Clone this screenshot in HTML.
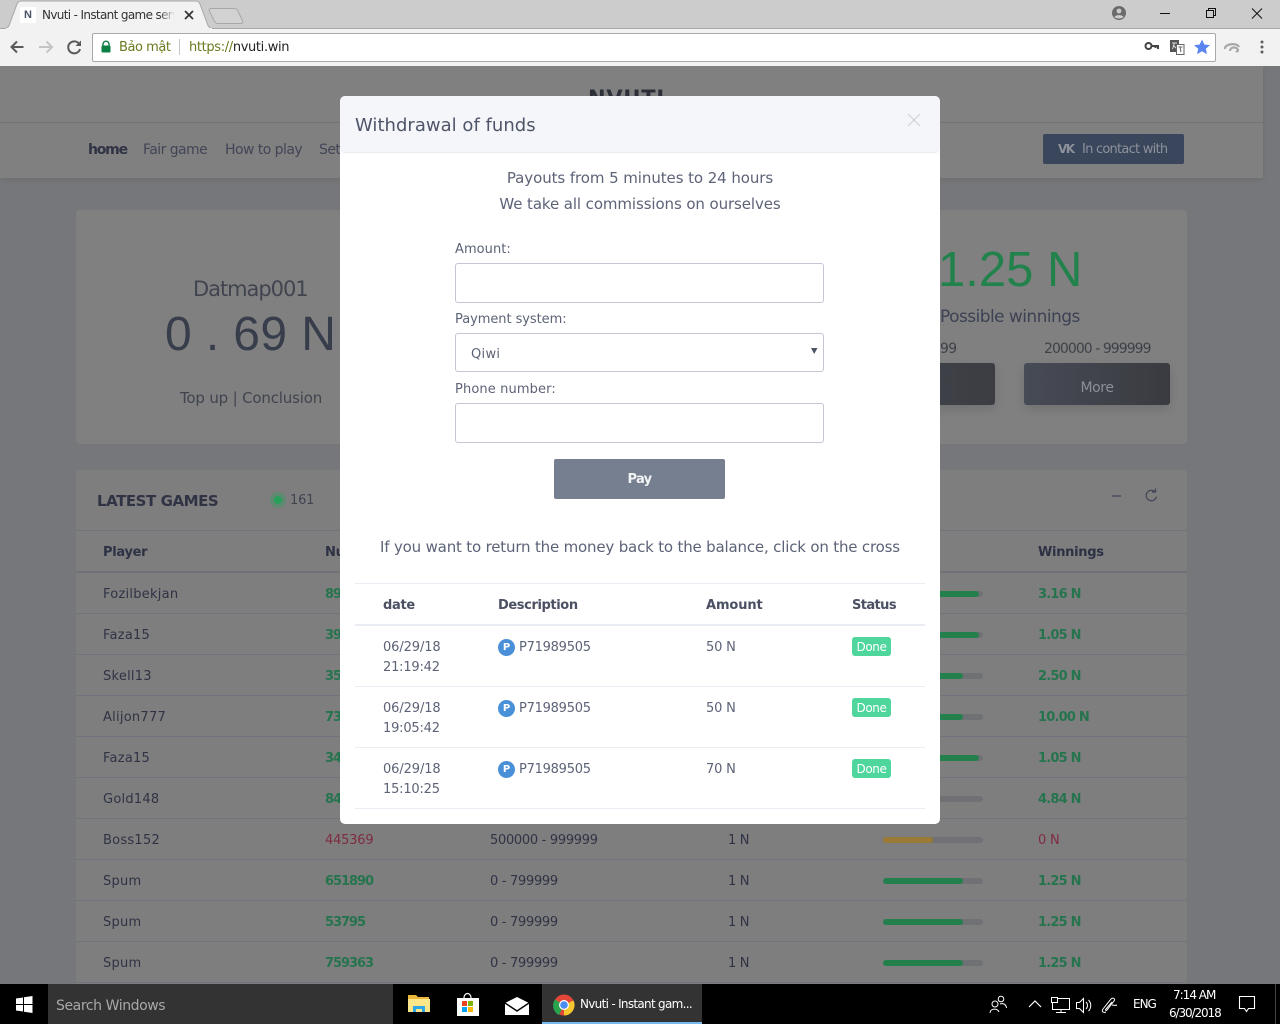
<!DOCTYPE html>
<html><head><meta charset="utf-8"><title>Nvuti</title>
<style>
html,body{margin:0;padding:0;width:1280px;height:1024px;overflow:hidden;background:#76777a}
body{position:relative;font-family:"DejaVu Sans","Liberation Sans",sans-serif;font-size:14px}
.t{position:absolute;white-space:nowrap;line-height:20px;height:20px}
.b{position:absolute}
.u{font-family:"Liberation Sans",sans-serif}
.tm{color:#5d6377;font-size:15px;letter-spacing:-.08px;margin-top:1px}
.sm{color:#5d6377;font-size:13px;letter-spacing:-.2px;margin-top:2px}
.th{color:#4b5063;font-size:13px;font-weight:bold;letter-spacing:-.3px;margin-top:2px}
.p{color:#2f3344;font-size:13px;letter-spacing:.25px;margin-top:2px}
.g{color:#26744e;font-size:13px;font-weight:bold;letter-spacing:-.8px;margin-top:2px}
.gn{color:#26744e;font-size:13px;font-weight:bold;letter-spacing:-1.05px;margin-top:2px}
.r{color:#7f2c3f;font-size:13px;letter-spacing:-.2px;margin-top:2px}
.d{color:#2f3344;font-size:13px;letter-spacing:-.3px;margin-top:2px}
.ln{position:absolute;height:1px;background:#70737b}
.bar{position:absolute;left:883px;width:100px;height:6px;border-radius:3px;background:#707175}
.bar i{display:block;height:6px;border-radius:3px;background:#23804d}
.mln{position:absolute;left:355px;width:570px;height:1px;background:#e9ecf3}
.inp{position:absolute;left:455px;width:367px;background:#fff;border:1px solid #c4c6d2;border-radius:3px}
.badge{position:absolute;left:852px;width:39px;height:19px;background:#4fd69c;border-radius:3px;color:#fff;font-size:12px;line-height:20px;text-align:center;letter-spacing:-.4px}
.pi{position:absolute;left:498px;width:17px;height:17px;border-radius:50%;background:#4a90d9;color:#fff;font-size:10px;font-weight:bold;line-height:17px;text-align:center}
</style></head><body>

<!-- PAGE (dimmed) -->
<div class="b" style="left:0;top:66px;width:1263px;height:112px;background:#808080;box-shadow:0 2px 6px rgba(0,0,0,.08)"></div>
<div class="ln" style="left:0;top:122px;width:1263px;background:#737373"></div>
<div class="t" style="left:588px;top:83px;width:78px;height:13px;overflow:hidden;font-size:21px;font-weight:bold;color:#2c2f38;line-height:30px;letter-spacing:.8px">NVUTI</div>
<div class="t" style="left:88px;top:140px;font-size:14px;font-weight:bold;color:#2f3344;letter-spacing:-1.2px">home</div>
<div class="t" style="left:143px;top:140px;font-size:14px;color:#414556;letter-spacing:-.55px">Fair game</div>
<div class="t" style="left:225px;top:140px;font-size:14px;color:#414556;letter-spacing:-.55px">How to play</div>
<div class="t" style="left:319px;top:140px;font-size:14px;color:#414556;letter-spacing:-.55px">Set</div>
<div class="b" style="left:1043px;top:134px;width:141px;height:30px;background:#3a465b;border-radius:2px"></div>
<div class="t" style="left:1058px;top:139px;font-size:12px;font-weight:bold;color:#8d919b;letter-spacing:-1.5px">VK</div>
<div class="t" style="left:1082px;top:140px;font-size:13px;color:#8d919b;letter-spacing:-.75px">In contact with</div>

<div class="b" style="left:76px;top:210px;width:1111px;height:234px;background:#808080;border-radius:4px"></div>
<div class="t" style="left:193px;top:278px;font-size:21px;line-height:22px;color:#40444f;letter-spacing:-1.05px">Datmap001</div>
<div class="t" style="left:165px;top:305px;height:60px;line-height:60px;font-size:48px;color:#383d4b;letter-spacing:.4px;font-family:'Liberation Sans',sans-serif">0 . 69 N</div>
<div class="t" style="left:180px;top:388px;font-size:15px;color:#40444f;letter-spacing:-.18px">Top up | Conclusion</div>
<div class="t" style="left:938px;top:240px;height:60px;line-height:60px;font-size:49px;color:#21824c;font-family:'Liberation Sans',sans-serif">1.25 N</div>
<div class="t" style="left:940px;top:307px;font-size:17px;color:#3c4253;letter-spacing:-.55px">Possible winnings</div>
<div class="t" style="left:940px;top:339px;font-size:14px;color:#3e4149;letter-spacing:-.6px">99</div>
<div class="t" style="left:1044px;top:339px;font-size:14px;color:#3e4149;letter-spacing:-.95px">200000 - 999999</div>
<div class="b" style="left:930px;top:363px;width:65px;height:42px;background:linear-gradient(90deg,#3f4149,#3c3d42);border-radius:3px;box-shadow:0 4px 10px rgba(0,0,0,.12)"></div>
<div class="b" style="left:1024px;top:363px;width:146px;height:42px;background:linear-gradient(90deg,#474b56,#3a3b40);border-radius:3px;box-shadow:0 4px 10px rgba(0,0,0,.12)"></div>
<div class="t" style="left:1024px;width:146px;top:378px;text-align:center;font-size:14px;color:#8b8e94;letter-spacing:-.4px">More</div>

<div class="b" style="left:76px;top:470px;width:1111px;height:514px;background:#7e7e7f;border-radius:4px 4px 0 0"></div>
<div class="ln" style="left:76px;top:530px;width:1111px"></div>
<div class="b" style="left:76px;top:571px;width:1111px;height:2px;background:#6e7278"></div>
<div class="t" style="left:97px;top:491px;font-size:15px;font-weight:bold;color:#2f3344;letter-spacing:-.45px">LATEST GAMES</div>
<div class="b" style="left:270px;top:492px;width:16px;height:16px;border-radius:50%;background:#5f8a72"></div>
<div class="b" style="left:274px;top:496px;width:8px;height:8px;border-radius:50%;background:#28a05a"></div>
<div class="t" style="left:290px;top:491px;font-size:13px;color:#40444f;letter-spacing:-.2px">161</div>
<svg class="b" style="left:1105px;top:486px" width="60" height="22" fill="none" stroke="#3f4354" stroke-width="1.2"><path d="M7 10h9"/><path d="M50 5.700a5.200 5.200 0 1 0 1.500 5M50.500 2.500v3.500H47"/></svg>

<div class="t th" style="left:103px;top:541px;color:#2d3144">Player</div>
<div class="t th" style="left:325px;top:541px;color:#2d3144">Nu</div>
<div class="t th" style="left:1038px;top:541px;color:#2d3144">Winnings</div>

<div class="t p" style="left:103px;top:583px">Fozilbekjan</div><div class="t gn" style="left:325px;top:583px">89</div><div class="t g" style="left:1038px;top:583px">3.16 N</div>
<div class="ln" style="left:76px;top:613px;width:1111px"></div>
<div class="t p" style="left:103px;top:624px">Faza15</div><div class="t gn" style="left:325px;top:624px">39</div><div class="t g" style="left:1038px;top:624px">1.05 N</div>
<div class="ln" style="left:76px;top:654px;width:1111px"></div>
<div class="t p" style="left:103px;top:665px">Skell13</div><div class="t gn" style="left:325px;top:665px">35</div><div class="t g" style="left:1038px;top:665px">2.50 N</div>
<div class="ln" style="left:76px;top:695px;width:1111px"></div>
<div class="t p" style="left:103px;top:706px">Alijon777</div><div class="t gn" style="left:325px;top:706px">73</div><div class="t g" style="left:1038px;top:706px">10.00 N</div>
<div class="ln" style="left:76px;top:736px;width:1111px"></div>
<div class="t p" style="left:103px;top:747px">Faza15</div><div class="t gn" style="left:325px;top:747px">34</div><div class="t g" style="left:1038px;top:747px">1.05 N</div>
<div class="ln" style="left:76px;top:777px;width:1111px"></div>
<div class="t p" style="left:103px;top:788px">Gold148</div><div class="t gn" style="left:325px;top:788px">84</div><div class="t g" style="left:1038px;top:788px">4.84 N</div>
<div class="ln" style="left:76px;top:818px;width:1111px"></div>
<div class="t p" style="left:103px;top:829px">Boss152</div><div class="t r" style="left:325px;top:829px">445369</div><div class="t d" style="left:490px;top:829px">500000 - 999999</div><div class="t d" style="left:728px;top:829px">1 N</div><div class="t r" style="left:1038px;top:829px">0 N</div>
<div class="ln" style="left:76px;top:859px;width:1111px"></div>
<div class="t p" style="left:103px;top:870px">Spum</div><div class="t gn" style="left:325px;top:870px">651890</div><div class="t d" style="left:490px;top:870px">0 - 799999</div><div class="t d" style="left:728px;top:870px">1 N</div><div class="t g" style="left:1038px;top:870px">1.25 N</div>
<div class="ln" style="left:76px;top:900px;width:1111px"></div>
<div class="t p" style="left:103px;top:911px">Spum</div><div class="t gn" style="left:325px;top:911px">53795</div><div class="t d" style="left:490px;top:911px">0 - 799999</div><div class="t d" style="left:728px;top:911px">1 N</div><div class="t g" style="left:1038px;top:911px">1.25 N</div>
<div class="ln" style="left:76px;top:941px;width:1111px"></div>
<div class="t p" style="left:103px;top:952px">Spum</div><div class="t gn" style="left:325px;top:952px">759363</div><div class="t d" style="left:490px;top:952px">0 - 799999</div><div class="t d" style="left:728px;top:952px">1 N</div><div class="t g" style="left:1038px;top:952px">1.25 N</div>
<div class="ln" style="left:76px;top:982px;width:1111px"></div>

<div class="bar" style="top:591px"><i style="width:96px"></i></div>
<div class="bar" style="top:632px"><i style="width:96px"></i></div>
<div class="bar" style="top:673px"><i style="width:80px"></i></div>
<div class="bar" style="top:714px"><i style="width:80px"></i></div>
<div class="bar" style="top:755px"><i style="width:96px"></i></div>
<div class="bar" style="top:796px"><i style="width:50px"></i></div>
<div class="bar" style="top:837px"><i style="width:50px;background:#9a7a34"></i></div>
<div class="bar" style="top:878px"><i style="width:80px"></i></div>
<div class="bar" style="top:919px"><i style="width:80px"></i></div>
<div class="bar" style="top:960px"><i style="width:80px"></i></div>

<!-- MODAL -->
<div class="b" style="left:340px;top:96px;width:600px;height:728px;background:#fff;border-radius:5px;overflow:hidden">
  <div class="b" style="left:0;top:0;width:600px;height:56px;background:#f5f6fa;border-bottom:1px solid #e9ebf0;border-radius:5px"></div>
</div>
<div class="t" style="left:355px;top:116px;font-size:18px;color:#4f5569;letter-spacing:.02px">Withdrawal of funds</div>
<svg class="b" style="left:907px;top:113px" width="14" height="14" stroke="#cfd1d6" stroke-width="1.2"><path d="M1 1l12 12M13 1L1 13"/></svg>
<div class="t tm" style="left:340px;width:600px;text-align:center;top:167px">Payouts from 5 minutes to 24 hours</div>
<div class="t tm" style="left:340px;width:600px;text-align:center;top:193px;letter-spacing:-.1px">We take all commissions on ourselves</div>
<div class="t sm" style="left:455px;top:238px;letter-spacing:.05px">Amount:</div>
<div class="inp" style="top:263px;height:38px"></div>
<div class="t sm" style="left:455px;top:308px;letter-spacing:-.06px">Payment system:</div>
<div class="inp" style="top:333px;height:37px"></div>
<div class="t sm" style="left:471px;top:343px;letter-spacing:.3px">Qiwi</div>
<svg class="b" style="left:811px;top:348px" width="7" height="6"><path d="M0 0h6.500L3.200 6z" fill="#4f5569"/></svg>
<div class="t sm" style="left:455px;top:378px;letter-spacing:.12px">Phone number:</div>
<div class="inp" style="top:403px;height:38px"></div>
<div class="b" style="left:554px;top:459px;width:171px;height:40px;background:#767f8f;border-radius:2px"></div>
<div class="t" style="left:554px;width:171px;text-align:center;top:470px;color:#f2f3f5;font-size:13px;font-weight:bold;letter-spacing:-.7px">Pay</div>
<div class="t tm" style="left:340px;width:600px;text-align:center;top:536px;letter-spacing:-.18px">If you want to return the money back to the balance, click on the cross</div>

<div class="mln" style="top:583px"></div>
<div class="t th" style="left:383px;top:594px">date</div>
<div class="t th" style="left:498px;top:594px;letter-spacing:-.4px">Description</div>
<div class="t th" style="left:706px;top:594px;letter-spacing:-.1px">Amount</div>
<div class="t th" style="left:852px;top:594px;letter-spacing:-.6px">Status</div>
<div class="mln" style="top:624px;height:2px"></div>

<div class="t sm" style="left:383px;top:636px;letter-spacing:-.1px">06/29/18</div><div class="t sm" style="left:383px;top:656px">21:19:42</div>
<div class="pi" style="top:639px">P</div><div class="t sm" style="left:519px;top:636px;letter-spacing:-.25px">P71989505</div>
<div class="t sm" style="left:706px;top:636px">50 N</div><div class="badge" style="top:637px">Done</div>
<div class="mln" style="top:686px"></div>

<div class="t sm" style="left:383px;top:697px;letter-spacing:-.1px">06/29/18</div><div class="t sm" style="left:383px;top:717px">19:05:42</div>
<div class="pi" style="top:700px">P</div><div class="t sm" style="left:519px;top:697px;letter-spacing:-.25px">P71989505</div>
<div class="t sm" style="left:706px;top:697px">50 N</div><div class="badge" style="top:698px">Done</div>
<div class="mln" style="top:747px"></div>

<div class="t sm" style="left:383px;top:758px;letter-spacing:-.1px">06/29/18</div><div class="t sm" style="left:383px;top:778px">15:10:25</div>
<div class="pi" style="top:761px">P</div><div class="t sm" style="left:519px;top:758px;letter-spacing:-.25px">P71989505</div>
<div class="t sm" style="left:706px;top:758px">70 N</div><div class="badge" style="top:759px">Done</div>
<div class="mln" style="top:808px"></div>

<!-- BROWSER CHROME -->
<div class="b" style="left:0;top:0;width:1280px;height:66px;background:#f2f2f2"></div>
<div class="b" style="left:0;top:0;width:1280px;height:28px;background:#cccccc"></div>
<svg class="b" style="left:0;top:0" width="260" height="30">
  <path d="M0 28.500h5c2 0 3-1 4-3L17 4c1-2 2-3 4-3h175c2 0 3 1 4 3l8 21.500c1 2 2 3 4 3h48" fill="#f2f2f2" stroke="#a8a8a8"/>
  <rect x="6" y="28" width="206" height="2" fill="#f2f2f2"/>
  <path d="M211 8.500c-1.500 0-2.200 1-1.800 2.200l5.500 11c.6 1.200 1.600 1.800 3 1.800h23c1.800 0 2.600-1.200 2-2.500l-5-10.500c-.7-1.400-1.700-2-3.200-2z" fill="#d2d2d2" stroke="#a8a8a8"/>
  <rect x="20" y="7" width="16" height="16" fill="#fff"/>
</svg>
<div class="b" style="left:212px;top:28px;width:1068px;height:1px;background:#a8a8a8"></div>
<div class="t u" style="left:24px;top:5px;font-size:11px;font-weight:bold;color:#4a5068">N</div>
<div class="t" style="left:42px;top:5px;width:133px;overflow:hidden;font-size:12px;color:#333;letter-spacing:-.65px;-webkit-mask-image:linear-gradient(90deg,#000 88%,transparent)">Nvuti - Instant game service</div>
<svg class="b" style="left:184px;top:10px" width="10" height="10" stroke="#333" stroke-width="1.700"><path d="M1 1l8 8M9 1L1 9"/></svg>
<svg class="b" style="left:1110px;top:5px" width="170" height="20">
  <circle cx="9" cy="8" r="7" fill="#6b6b6b"/><circle cx="9" cy="6" r="2.400" fill="#ccc"/><path d="M4.500 12c1-2.500 8-2.500 9 0-2 2-7 2-9 0z" fill="#ccc"/>
  <path d="M50 8.500h10" stroke="#111" stroke-width="1"/>
  <rect x="96.500" y="5.500" width="7" height="7" fill="none" stroke="#111"/><path d="M98.500 5.500v-2h7v7h-2" fill="none" stroke="#111"/>
  <path d="M142 3.500l10 10M152 3.500l-10 10" stroke="#111" stroke-width="1"/>
</svg>
<svg class="b" style="left:0;top:28px" width="90" height="38" fill="none">
  <path d="M23.500 19H12M17 13.500L11.500 19l5.500 5.500" stroke="#5a5a5a" stroke-width="2"/>
  <path d="M39 19h12M46.500 13.500L52 19l-5.500 5.500" stroke="#c4c4c4" stroke-width="2"/>
  <path d="M79.500 16.500A6 6 0 1 0 80 21" stroke="#5a5a5a" stroke-width="2"/><path d="M81 12.500v5.500h-5.500z" fill="#5a5a5a"/>
</svg>
<div class="b" style="left:92px;top:33px;width:1122px;height:27px;background:#fff;border:1px solid #a9a9a9;border-radius:2px"></div>
<svg class="b" style="left:100px;top:40px" width="12" height="13"><path d="M3 6V4.200a3 3 0 0 1 6 0V6" fill="none" stroke="#0b8043" stroke-width="1.400"/><rect x="1.500" y="5.500" width="9" height="7" rx="1" fill="#0b8043"/></svg>
<div class="t" style="left:119px;top:38px;font-size:13px;color:#6b7a1f;letter-spacing:-.45px">Bảo mật</div>
<div class="b" style="left:179px;top:39px;width:1px;height:16px;background:#c4c4c4"></div>
<div class="t" style="left:189px;top:38px;font-size:13px;letter-spacing:-.35px;color:#6b7a1f">https://<span style="color:#222">nvuti.win</span></div>
<svg class="b" style="left:1144px;top:36px" width="130" height="22">
  <circle cx="4.500" cy="10" r="3" fill="none" stroke="#444" stroke-width="2"/><path d="M8 10h6v3M11.500 10v2" fill="none" stroke="#444" stroke-width="2"/>
  <rect x="26" y="4" width="9" height="12" fill="#555"/><path d="M28 7h5M30.500 7l-2 6M29 9l4 4" stroke="#ddd" fill="none"/><rect x="32.500" y="8.500" width="7.500" height="10" fill="#fff" stroke="#666"/><path d="M34.500 11h4M36 11l1 5" stroke="#666" fill="none"/>
  <path d="M58 3.500l2.300 5 5.700.6-4.200 3.700 1.200 5.500-5-3-5 3 1.200-5.500-4.200-3.700 5.700-.6z" fill="#5a84f0"/>
  <path d="M81 13c-1-5 12-7 14-2M86 15c0-4 6-5 8-1 0 1-1 2-2 1" fill="none" stroke="#a8a8a8" stroke-width="2.200"/>
  <circle cx="118" cy="6" r="1.500" fill="#5f5f5f"/><circle cx="118" cy="11" r="1.500" fill="#5f5f5f"/><circle cx="118" cy="16" r="1.500" fill="#5f5f5f"/>
</svg>

<!-- TASKBAR -->
<div class="b" style="left:0;top:984px;width:1280px;height:40px;background:#000"></div>
<svg class="b" style="left:16px;top:996px" width="17" height="17" fill="#fff"><path d="M0 2.500l7-1v6.500H0zM8 1.300L16.500 0v8H8zM0 9h7v6.500l-7-1zM8 9h8.500v8L8 15.700z"/></svg>
<div class="b" style="left:48px;top:984px;width:345px;height:40px;background:#333"></div>
<div class="t" style="left:56px;top:996px;font-size:14px;color:#a8a8a8;letter-spacing:-.42px">Search Windows</div>
<div class="b" style="left:542px;top:984px;width:160px;height:40px;background:#333"></div>
<div class="b" style="left:542px;top:1022px;width:160px;height:2px;background:#76b9ed"></div>
<svg class="b" style="left:408px;top:994px" width="22" height="20">
  <path d="M0 1h8l2 2h11v3H0z" fill="#e8b63a"/><rect y="5" width="22" height="13" fill="#fde58a"/><path d="M5 18v-6h12v6h-3v-3H8v3z" fill="#2da7e6"/>
</svg>
<svg class="b" style="left:456px;top:992px" width="24" height="24">
  <path d="M8 6c0-6 7-6 7 0" fill="none" stroke="#fff" stroke-width="1.200"/><rect x="1" y="6" width="22" height="18" fill="#fff"/>
  <rect x="6" y="9" width="5" height="5" fill="#e8431f"/><rect x="12" y="9" width="5" height="5" fill="#7db700"/><rect x="6" y="15" width="5" height="5" fill="#00a1f1"/><rect x="12" y="15" width="5" height="5" fill="#fdb900"/>
</svg>
<svg class="b" style="left:505px;top:997px" width="24" height="18"><path d="M0 6L12 0l12 6v12H0z" fill="#fff"/><path d="M0 6l12 8 12-8" fill="none" stroke="#000" stroke-width="1.400"/></svg>
<svg class="b" style="left:553px;top:994px" width="22" height="22" viewBox="0 0 22 22">
  <circle cx="11" cy="11" r="10.500" fill="#e2473a"/><path d="M11 11L20.500 6.500A10.500 10.500 0 0 1 11 21.500z" fill="#f7c82d"/><path d="M11 11l-5 10A10.500 10.500 0 0 1 2 5.500z" fill="#2ba24c"/><circle cx="11" cy="11" r="5" fill="#fff"/><circle cx="11" cy="11" r="3.800" fill="#4b8cf0"/>
</svg>
<div class="t" style="left:580px;top:994px;font-size:12px;color:#fff;letter-spacing:-.7px">Nvuti - Instant gam...</div>
<svg class="b" style="left:988px;top:994px" width="140" height="22" fill="none" stroke="#fff" stroke-width="1">
  <circle cx="7" cy="10" r="3"/><path d="M2 19c0-5 8-5 9-1"/><circle cx="13" cy="5" r="2.800"/><path d="M12 10c3-1 6 0 6.500 4"/>
  <path d="M41 13l6-6 6 6" stroke-width="1.200"/>
  <rect x="64.500" y="4.500" width="17" height="11"/><rect x="63.500" y="3.500" width="6" height="5" fill="#000"/><path d="M73 15.500v3M68 18.500h10"/>
  <path d="M88.500 8.500v6h3l4 4v-14l-4 4zM98 8c2 2 2 5 0 7M100.500 6c3 3 3 8 0 11"/>
  <path d="M118 18c-2 1-5 0-3-3l8-10c2-2 5 0 3 2l-7 9c-1 1-2 0-1-1l6-7M124 11c2 0 3 1 5 0"/>
</svg>
<div class="t" style="left:1133px;top:994px;font-size:12px;color:#fff;letter-spacing:-1px">ENG</div>
<div class="t" style="left:1173px;top:985px;font-size:12px;color:#fff;letter-spacing:-1px">7:14 AM</div>
<div class="t" style="left:1169px;top:1003px;font-size:12px;color:#fff;letter-spacing:-1.1px">6/30/2018</div>
<svg class="b" style="left:1238px;top:995px" width="18" height="18" fill="none" stroke="#fff" stroke-width="1.100"><path d="M1.500 1.500h15v12h-6l-2 3-2-3h-5z"/></svg>
<div class="b" style="left:1275px;top:984px;width:1px;height:40px;background:#444"></div>
</body></html>
